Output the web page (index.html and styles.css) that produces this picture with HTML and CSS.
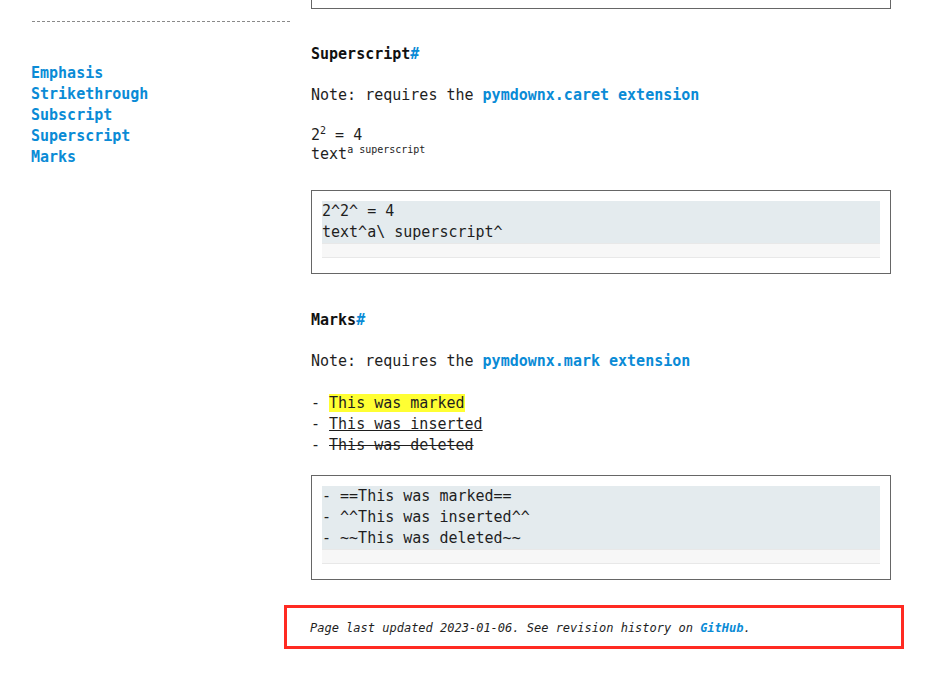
FILE: index.html
```html
<!DOCTYPE html>
<html>
<head>
<meta charset="utf-8">
<link rel="stylesheet" href="styles.css">
</head>
<body>
<div class="page">
  <aside class="sidebar">
    <div class="rule"></div>
    <nav class="toc">
      <a href="#">Emphasis</a>
      <a href="#">Strikethrough</a>
      <a href="#">Subscript</a>
      <a href="#">Superscript</a>
      <a href="#">Marks</a>
    </nav>
  </aside>
  <main class="main">
    <div class="prev-box"></div>
    <h2 class="h2 first">Superscript<a class="anchor" href="#">#</a></h2>
    <p class="note">Note: requires the <a class="ext" href="#">pymdownx.caret extension</a></p>
    <p class="sup-demo">2<sup>2</sup> = 4<br>text<sup>a superscript</sup></p>
    <div class="code-box first-code">
      <pre class="code">2^2^ = 4
text^a\ superscript^</pre>
      <div class="scroll"></div>
    </div>
    <h2 class="h2 second">Marks<a class="anchor" href="#">#</a></h2>
    <p class="note">Note: requires the <a class="ext" href="#">pymdownx.mark extension</a></p>
    <div class="marks">
      <div>- <mark>This was marked</mark></div>
      <div>- <ins>This was inserted</ins></div>
      <div>- <del>This was deleted</del></div>
    </div>
    <div class="code-box second-code">
      <pre class="code">- ==This was marked==
- ^^This was inserted^^
- ~~This was deleted~~</pre>
      <div class="scroll"></div>
    </div>
    <footer class="footer">Page last updated 2023-01-06. See revision history on <a href="#">GitHub</a>.</footer>
  </main>
</div>
</body>
</html>
```

FILE: styles.css
```css
* { box-sizing: border-box; }
html, body { margin: 0; padding: 0; background: #fff; }
body {
  font-family: "DejaVu Sans Mono", "Liberation Mono", monospace;
  font-size: 15px;
  line-height: 21px;
  color: #1e1e1e;
}
a { color: #0a8bd6; text-decoration: none; }
.page {
  display: flex;
  padding-left: 32px;
  gap: 21px;
}
.sidebar { width: 258px; flex: none; }
.rule {
  margin-top: 21px;
  border-top: 1px dashed #8a8a8a;
}
.toc {
  margin-top: 41px;
  display: flex;
  flex-direction: column;
}
.toc a { font-weight: bold; line-height: 21px; margin-left: -1px; }
.main { width: 580px; flex: none; }
.prev-box {
  height: 9px;
  border: 1px solid #666;
  border-top: none;
}
.h2 {
  font-size: 15px;
  line-height: 21px;
  font-weight: bold;
  margin: 0;
  color: #111;
}
.h2.first { margin-top: 35px; }
.h2.second { margin-top: 36px; }
.anchor { color: #0a8bd6; }
.ext { font-weight: bold; }
.note { margin: 20px 0 0; }
.sup-demo { margin: 20px 0 0; line-height: 19px; }
sup { font-size: 10px; line-height: 0; vertical-align: 6px; }
.code-box {
  border: 1px solid #666;
  padding: 10px 10px 15px;
}
.first-code { margin-top: 26px; }
.second-code { margin-top: 19px; }
.code {
  margin: 0;
  background: #e4ebee;
  font-family: "DejaVu Sans Mono", "Liberation Mono", monospace;
  font-size: 15px;
  line-height: 21px;
  color: #1e1e1e;
}
.scroll {
  height: 15px;
  background: #f7f7f7;
  border-top: 1px solid #e8e8e8;
  border-bottom: 1px solid #e8e8e8;
}
.marks { margin-top: 21px; }
mark { background: #ffff33; color: #1e1e1e; }
ins { text-decoration: underline; }
del { text-decoration: line-through; }
.footer {
  margin: 25px -13px 0 -27px;
  border: 3px solid #ff2a22;
  padding: 12px 23px 10px;
  font-size: 12px;
  line-height: 16px;
  font-style: italic;
  color: #1e1e1e;
}
.footer a { font-weight: bold; }
```
